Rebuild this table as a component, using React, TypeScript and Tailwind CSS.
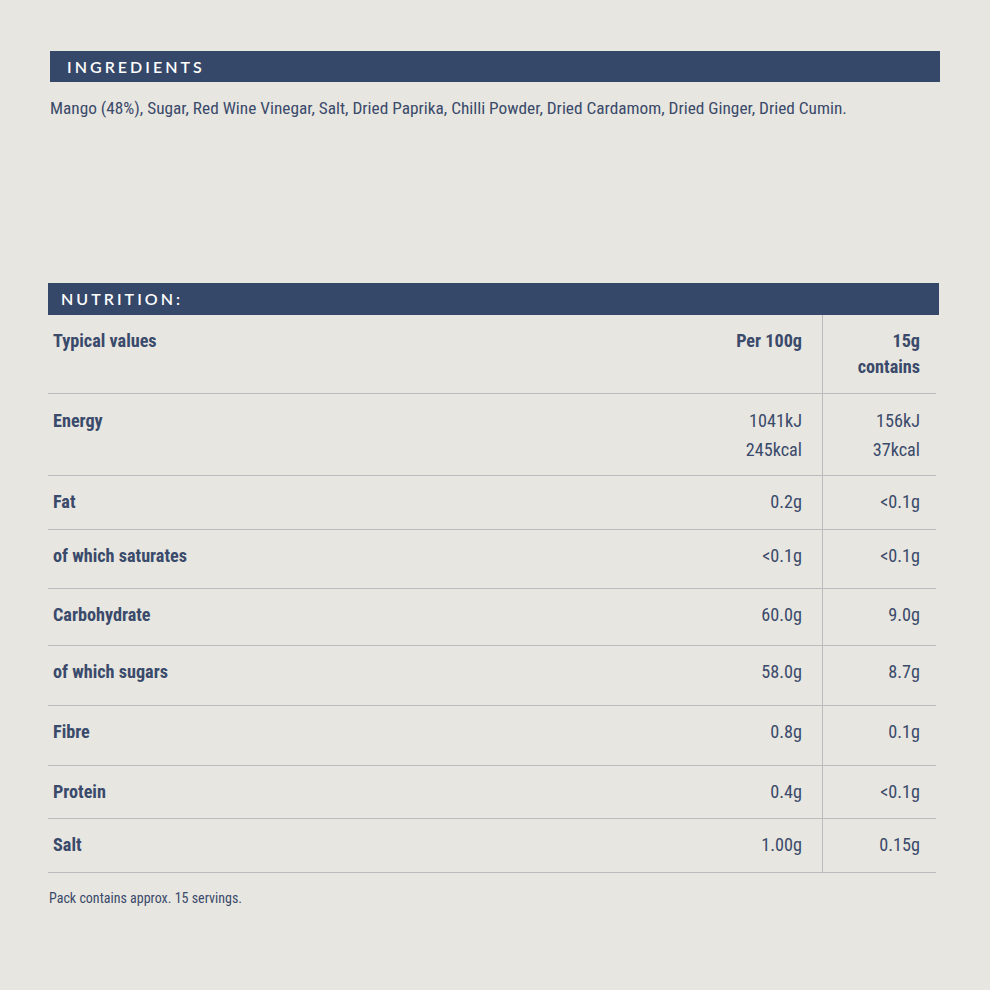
const rows = [
  { label: "Energy", per100: ["1041kJ", "245kcal"], portion: ["156kJ", "37kcal"], h: "h-[82px]" },
  { label: "Fat", per100: ["0.2g"], portion: ["<0.1g"], h: "h-[54px]" },
  { label: "of which saturates", per100: ["<0.1g"], portion: ["<0.1g"], h: "h-[59px]" },
  { label: "Carbohydrate", per100: ["60.0g"], portion: ["9.0g"], h: "h-[57px]" },
  { label: "of which sugars", per100: ["58.0g"], portion: ["8.7g"], h: "h-[60px]" },
  { label: "Fibre", per100: ["0.8g"], portion: ["0.1g"], h: "h-[60px]" },
  { label: "Protein", per100: ["0.4g"], portion: ["<0.1g"], h: "h-[53px]" },
  { label: "Salt", per100: ["1.00g"], portion: ["0.15g"], h: "h-[54px]" },
];

const SectionHeader = ({ title, className }: { title: string; className?: string }) => (
  <div className={`h-[31px] bg-[#36486a] flex items-center font-['Lato',sans-serif] text-[16px] font-semibold tracking-[0.19em] text-white ${className ?? ""}`}>
    {title}
  </div>
);

const App = () => {
  return (
    <div className="min-h-[990px] w-full bg-[#e8e6e0] pt-[51px] text-[#3a4a6b] font-['Roboto_Condensed','Liberation_Sans',sans-serif]">
      {/* Ingredients */}
      <section className="ml-[50px] w-[890px]">
        <SectionHeader title="INGREDIENTS" className="pl-[17px]" />
        <p className="mt-[14px] text-[17.3px] leading-[24px]">
          Mango (48%), Sugar, Red Wine Vinegar, Salt, Dried Paprika, Chilli Powder, Dried Cardamom, Dried Ginger, Dried Cumin.
        </p>
      </section>

      {/* Nutrition */}
      <section className="ml-[48px] mt-[163px] w-[891px]">
        <SectionHeader title="NUTRITION:" className="h-[32px] pl-[13px]" />
        <div className="w-[888px] text-[18.2px]">
          <div className="flex h-[79px] border-b border-[#b9bbbc] font-bold leading-[26px]">
            <div className="flex-1 pl-[5px] pt-[13px]">Typical values</div>
            <div className="pr-[20px] pt-[13px] text-right">Per 100g</div>
            <div className="w-[114px] border-l border-[#b9bbbc] pr-[16px] pt-[13px] text-right">
              15g
              <br />
              contains
            </div>
          </div>
          {rows.map((r) => (
            <div key={r.label} className={`flex ${r.h} border-b border-[#b9bbbc]`}>
              <div className={`flex-1 pl-[5px] font-bold ${r.per100.length > 1 ? "pt-[12px] leading-[29px]" : "pt-[13px] leading-[26px]"}`}>
                {r.label}
              </div>
              <div className={`pr-[20px] text-right ${r.per100.length > 1 ? "pt-[12px] leading-[29px]" : "pt-[13px] leading-[26px]"}`}>
                {r.per100.map((v) => (
                  <div key={v}>{v}</div>
                ))}
              </div>
              <div className={`w-[114px] border-l border-[#b9bbbc] pr-[16px] text-right ${r.portion.length > 1 ? "pt-[12px] leading-[29px]" : "pt-[13px] leading-[26px]"}`}>
                {r.portion.map((v) => (
                  <div key={v}>{v}</div>
                ))}
              </div>
            </div>
          ))}
        </div>
        <p className="mt-[15px] pl-[1px] text-[14px] leading-[20px]">Pack contains approx. 15 servings.</p>
      </section>
    </div>
  );
};

export default App;
